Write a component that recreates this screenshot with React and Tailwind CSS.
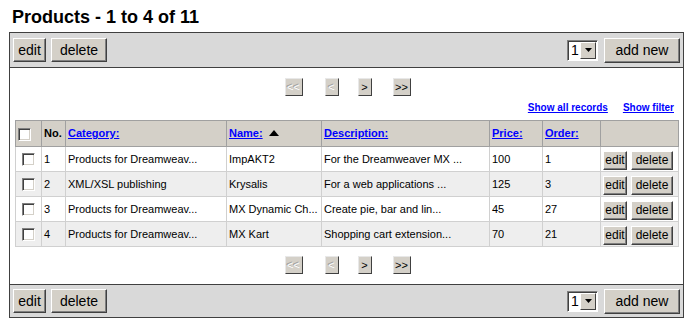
import React from 'react';

const rows = [
  { no: 1, category: 'Products for Dreamweav...', name: 'ImpAKT2', description: 'For the Dreamweaver MX ...', price: 100, order: 1 },
  { no: 2, category: 'XML/XSL publishing', name: 'Krysalis', description: 'For a web applications ...', price: 125, order: 3 },
  { no: 3, category: 'Products for Dreamweav...', name: 'MX Dynamic Ch...', description: 'Create pie, bar and lin...', price: 45, order: 27 },
  { no: 4, category: 'Products for Dreamweav...', name: 'MX Kart', description: 'Shopping cart extension...', price: 70, order: 21 },
];

const btn =
  'bg-[#d4d0c8] border border-t-white border-l-white border-r-[#404040] border-b-[#404040] shadow-[inset_-1px_-1px_#808080] text-black leading-none';

const Button = ({ children, className = '' }) => (
  <button className={`${btn} ${className}`}>{children}</button>
);

const Checkbox = () => (
  <span className="inline-block w-[13px] h-[13px] bg-white border border-t-[#808080] border-l-[#808080] border-r-white border-b-white shadow-[inset_1px_1px_#404040,inset_-1px_-1px_#d4d0c8] align-middle" />
);

const PageSelect = () => (
  <div className="flex items-center w-[31px] h-[21px] bg-white border border-t-[#808080] border-l-[#808080] border-r-white border-b-white shadow-[inset_1px_1px_#404040]">
    <span className="pl-[3px] flex-1 text-[14px] leading-none">1</span>
    <span className="w-[16px] h-[17px] mr-[1px] bg-[#d4d0c8] border border-t-white border-l-white border-r-[#404040] border-b-[#404040] flex items-center justify-center">
      <svg width="7" height="4" viewBox="0 0 7 4"><path d="M0 0h7L3.5 4z" fill="#000" /></svg>
    </span>
  </div>
);

const Toolbar = ({ bottom }) => (
  <div
    className={`flex items-center justify-between bg-[#d9d9d9] px-[3px] ${
      bottom ? 'h-[33px] border-t border-[#404040]' : 'h-[35px] border-b border-[#404040]'
    }`}
  >
    <div className="flex gap-[5px]">
      <Button className="w-[33px] h-[24px] text-[14px]">edit</Button>
      <Button className="w-[56px] h-[24px] text-[14px]">delete</Button>
    </div>
    <div className="flex items-center gap-[6px]">
      <PageSelect />
      <Button className="w-[76px] h-[25px] text-[14px]">add new</Button>
    </div>
  </div>
);

const NavBtn = ({ label, disabled, className = '' }) => (
  <span
    className={`inline-flex items-center justify-center h-[18px] bg-[#d4d0c8] border border-t-[#e8e8e8] border-l-[#e8e8e8] border-r-[#404040] border-b-[#404040] text-[11px] leading-none ${
      disabled ? 'text-white [text-shadow:-1px_-1px_#9a9a9a]' : 'text-black'
    } ${className}`}
  >
    {label}
  </span>
);

const Pager = () => (
  <div className="flex justify-center pl-[2px]">
    <NavBtn label="<<" disabled className="w-[18px]" />
    <NavBtn label="<" disabled className="w-[14px] ml-[22px]" />
    <NavBtn label=">" className="w-[14px] ml-[19px]" />
    <NavBtn label=">>" className="w-[18px] ml-[21px]" />
  </div>
);

const th = 'border border-[#a0a0a0] text-left px-[2px] font-bold';
const td = 'border border-[#d0d0d0] px-[2px] align-middle';

export default function App() {
  return (
    <div className="w-[692px] h-[326px] bg-white text-black font-['Liberation_Sans',Arial,sans-serif]">
      <h1 className="h-[32px] pl-[12px] pt-[6px] text-[18px] leading-[22px] font-bold">Products - 1 to 4 of 11</h1>
      <div className="ml-[9px] w-[675px] border border-[#404040]">
        <Toolbar />
        <div className="pt-[10px] pb-[10px]">
          <Pager />
          <div className="flex justify-end gap-[15px] pr-[9px] mt-[6px] text-[10px] leading-[12px] font-bold">
            <a href="#" className="text-[#0000ff] underline">Show all records</a>
            <a href="#" className="text-[#0000ff] underline">Show filter</a>
          </div>
          <table className="ml-[5px] mt-[6px] w-[663px] border-collapse border border-[#404040] text-[11px] table-fixed">
            <colgroup>
              <col className="w-[26px]" />
              <col className="w-[24px]" />
              <col className="w-[161px]" />
              <col className="w-[95px]" />
              <col className="w-[168px]" />
              <col className="w-[53px]" />
              <col className="w-[58px]" />
              <col className="w-[78px]" />
            </colgroup>
            <thead>
              <tr className="h-[26px] bg-[#d4d0c8] border-b border-[#808080]">
                <th className={`${th} text-center`}><Checkbox /></th>
                <th className={th}>No.</th>
                <th className={th}><a href="#" className="text-[#0000ff] underline">Category:</a></th>
                <th className={th}>
                  <a href="#" className="text-[#0000ff] underline">Name:</a>
                  <svg className="inline-block ml-[6px] align-[1px]" width="10" height="6" viewBox="0 0 10 6">
                    <path d="M5 0L10 6H0z" fill="#000" />
                  </svg>
                </th>
                <th className={th}><a href="#" className="text-[#0000ff] underline">Description:</a></th>
                <th className={th}><a href="#" className="text-[#0000ff] underline">Price:</a></th>
                <th className={th}><a href="#" className="text-[#0000ff] underline">Order:</a></th>
                <th className={th}></th>
              </tr>
            </thead>
            <tbody>
              {rows.map((r, i) => (
                <tr key={r.no} className={`h-[25px] ${i % 2 ? 'bg-[#eeeeee]' : 'bg-white'}`}>
                  <td className={`${td} text-center`}><Checkbox /></td>
                  <td className={td}>{r.no}</td>
                  <td className={td}>{r.category}</td>
                  <td className={td}>{r.name}</td>
                  <td className={td}>{r.description}</td>
                  <td className={td}>{r.price}</td>
                  <td className={td}>{r.order}</td>
                  <td className={`${td} pl-[2px] pr-[3px]`}>
                    <div className="flex gap-[4px] pt-[2px]">
                      <Button className="w-[24px] h-[19px] text-[12px]">edit</Button>
                      <Button className="w-[42px] h-[19px] text-[12px]">delete</Button>
                    </div>
                  </td>
                </tr>
              ))}
            </tbody>
          </table>
          <div className="mt-[9px]">
            <Pager />
          </div>
        </div>
        <Toolbar bottom />
      </div>
    </div>
  );
}
